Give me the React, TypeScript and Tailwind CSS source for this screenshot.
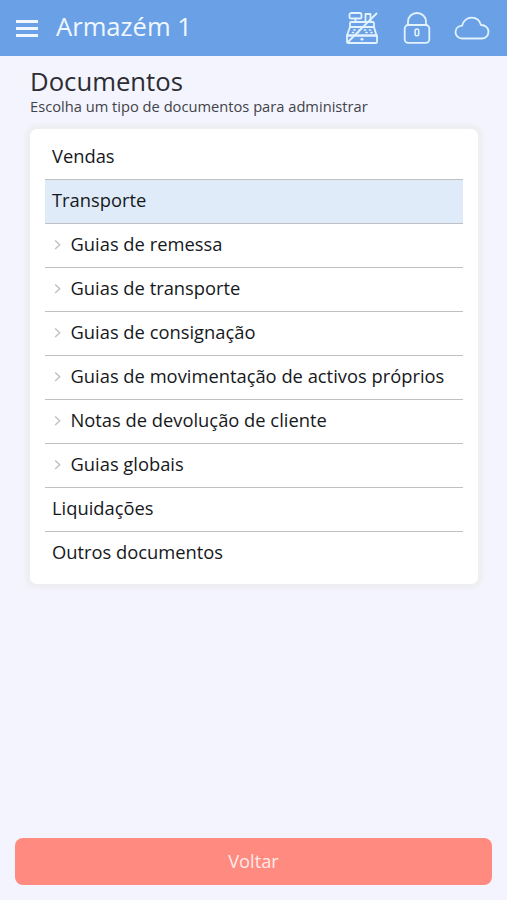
import React from "react";

type Entry = { label: string; child?: boolean; active?: boolean };

const entries: Entry[] = [
  { label: "Vendas" },
  { label: "Transporte", active: true },
  { label: "Guias de remessa", child: true },
  { label: "Guias de transporte", child: true },
  { label: "Guias de consignação", child: true },
  { label: "Guias de movimentação de activos próprios", child: true },
  { label: "Notas de devolução de cliente", child: true },
  { label: "Guias globais", child: true },
  { label: "Liquidações" },
  { label: "Outros documentos" },
];

function RegisterOffIcon() {
  return (
    <svg width="34" height="34" viewBox="0 0 34 34" fill="none" stroke="currentColor" strokeWidth="1.8" strokeLinecap="round" strokeLinejoin="round">
      <rect x="4.500" y="2" width="12" height="5.500" rx="1.800" />
      <path d="M10.500 7.500v3.500M20.500 10.500V3h5v7.500" />
      <path d="M5 15.500v-3.200q0-1.300 1.300-1.300h21.400q1.300 0 1.300 1.300v3.200" />
      <path d="M5 16h24l2.500 8.500h-29.500z" />
      <path d="M2 24.500h30v6.200q0 1.300-1.300 1.300h-27.400q-1.300 0-1.300-1.300z" />
      <path d="M9 19h1M14 19h1M19.500 19h1M24.500 19h1M7.500 21.500h1M12.500 21.500h1M21 21.500h1M26 21.500h1" strokeWidth="1.700" />
      <path d="M16.700 28.300h.6" strokeWidth="2.400" />
      <path d="M3 31 31.500 2.500" />
    </svg>
  );
}

function LockIcon() {
  return (
    <svg width="28" height="34" viewBox="0 0 28 34" fill="none" stroke="currentColor" strokeWidth="1.8" strokeLinejoin="round">
      <rect x="1.700" y="14" width="24.600" height="17.800" rx="3.500" />
      <path d="M5 14V10.500a9 8.500 0 0 1 18 0v3.500" />
      <rect x="12.100" y="18" width="3.600" height="6.800" rx="1.700" strokeWidth="1.600" />
    </svg>
  );
}

function CloudIcon() {
  return (
    <svg width="36" height="24" viewBox="0 0 36 24" fill="none" stroke="currentColor" strokeWidth="1.8" strokeLinejoin="round">
      <path d="M8 22.500a6.500 6.500 0 0 1-6.500-6.300c0-3.700 2.800-6.300 6.700-6.500C9 4.800 13 1.700 17.700 1.700c4.800 0 8 2.700 9.300 7.300 4.300 0 7.500 2.900 7.500 6.800 0 3.800-3 6.700-6.800 6.700z" />
    </svg>
  );
}

export default function App() {
  return (
    <div className="flex h-[900px] w-full flex-col bg-[#f3f4fd] font-['Open_Sans','Noto_Sans',sans-serif] text-[#16181c]">
      <header className="flex h-14 shrink-0 items-center bg-[#6aa1e6] pl-4 pr-[17px] text-[#f0f7ff]">
        <button aria-label="Menu" className="flex w-[22px] flex-col gap-[4px] pt-px">
          <span className="h-[3px] bg-current" />
          <span className="h-[3px] bg-current" />
          <span className="h-[3px] bg-current" />
        </button>
        <span className="ml-[18px] pb-[3px] text-[25.6px] leading-8">Armazém 1</span>
        <div className="ml-auto flex items-center text-[#e2f2ff]">
          <RegisterOffIcon />
          <div className="ml-[24px]"><LockIcon /></div>
          <div className="ml-[23px]"><CloudIcon /></div>
        </div>
      </header>

      <main className="flex-1 px-[30px] pt-[10px]">
        <h1 className="text-[25.7px] leading-[32px] text-[#2c2d32]">Documentos</h1>
        <p className="-mt-[2px] text-[14.68px] leading-[20px] text-[#424349]">Escolha um tipo de documentos para administrar</p>
        <ul className="mt-[13px] w-[448px] rounded-[7px] bg-white px-[15px] pb-2 pt-[7px] shadow-[0_0_3px_5px_#efeff3]">
          {entries.map((entry) => (
            <li
              key={entry.label}
              className={`flex h-11 items-center border-b border-[#c0c1c5] px-[7px] pb-[4px] text-[18.33px] last:border-b-0 last:pb-[5px] ${entry.active ? "bg-[#dfebf8]" : ""}`}
            >
              {entry.child && (
                <svg className="mr-[7.5px]" width="11" height="12" viewBox="0 0 11 12" fill="none" stroke="#bfc0c3" strokeWidth="1.400">
                  <path d="m3.200 2.500 4.500 4.300-4.500 4.300" />
                </svg>
              )}
              {entry.label}
            </li>
          ))}
        </ul>
      </main>

      <footer className="px-[15px] pb-[15px]">
        <button className="h-[47px] w-full rounded-[8px] bg-[#ff8a80] pb-[2px] text-[18.3px] text-[#ffe9e7]">Voltar</button>
      </footer>
    </div>
  );
}
